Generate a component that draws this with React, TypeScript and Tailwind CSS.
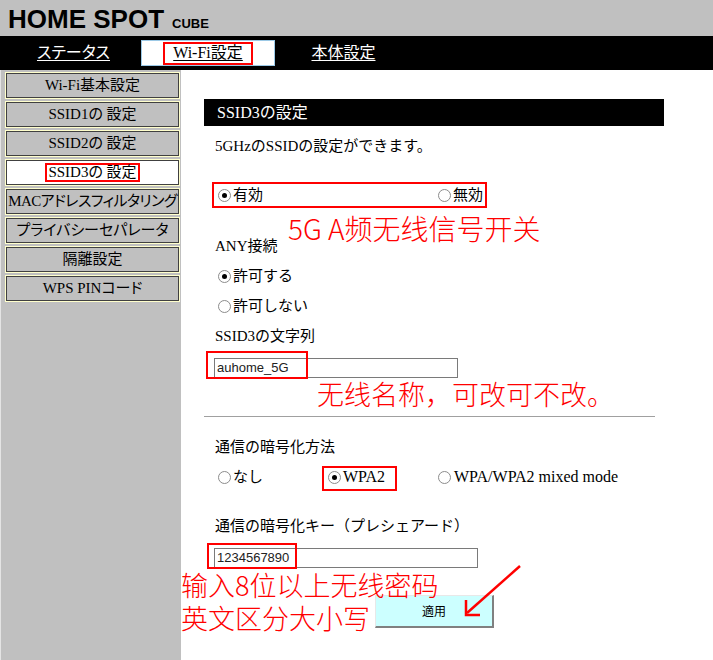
import React from "react";

const jp = "font-['Liberation_Serif','Noto_Sans_CJK_JP',serif]";
const zh = "font-['Noto_Sans_CJK_SC',sans-serif] font-light";

function Radio({ checked }: { checked?: boolean }) {
  return (
    <span className="inline-flex w-[13px] h-[13px] shrink-0 items-center justify-center rounded-full border border-[#8c8c8c] bg-white">
      {checked && <span className="w-[5px] h-[5px] rounded-full bg-black" />}
    </span>
  );
}

const menu = [
  "Wi-Fi基本設定",
  "SSID1の 設定",
  "SSID2の 設定",
  "SSID3の 設定",
  "MACアドレスフィルタリング",
  "プライバシーセパレータ",
  "隔離設定",
  "WPS PINコード",
];

export default function App() {
  return (
    <div className={`min-h-[660px] flex flex-col ${jp} text-black`}>
      {/* header */}
      <header className="h-[36px] bg-[#c0c0c0] pl-[8px] pt-[6px] flex items-baseline font-['Liberation_Sans',sans-serif] font-bold">
        <span className="text-[26px] leading-[26px]">HOME SPOT</span>
        <span className="ml-[8px] text-[13px] leading-[13px]">CUBE</span>
      </header>

      {/* tabs */}
      <nav className="h-[34px] bg-black flex pl-[6px] text-[16px] [font-feature-settings:'palt']">
        <div className="w-[135px] flex items-center justify-center text-white underline underline-offset-2">
          ステータス
        </div>
        <div className="w-[135px] pt-[4px]">
          <div className="w-[134px] h-[26px] bg-white border border-[#9cc9e6] flex items-center justify-center">
            <span className="h-[23px] px-[8px] border-2 border-[#ff0000] flex items-center underline underline-offset-2">
              Wi-Fi設定
            </span>
          </div>
        </div>
        <div className="w-[135px] flex items-center justify-center text-white underline underline-offset-2">
          本体設定
        </div>
      </nav>

      <div className="flex-1 flex">
        {/* side menu */}
        <aside className="w-[181px] shrink-0 bg-[#c0c0c0] border-l border-[#e4e4e4] pl-[4px] pt-[2px] flex flex-col gap-[2px] text-[15px] [font-feature-settings:'palt']">
          {menu.map((m, i) => (
            <div key={m} className="h-[27px] w-[175px] border border-[#ffffcc]">
              <div
                className={`h-full border border-[#404040] flex items-center justify-center whitespace-nowrap ${
                  i === 3 ? "bg-white" : ""
                } ${i === 4 ? "tracking-[-0.6px]" : ""}`}
              >
                {i === 3 ? (
                  <span className="h-[19px] px-[1px] border-2 border-[#ff0000] flex items-center">{m}</span>
                ) : (
                  m
                )}
              </div>
            </div>
          ))}
        </aside>

        {/* main */}
        <main className="relative flex-1 bg-white pt-[29px] pl-[23px] text-[15px]">
          <div className="w-[460px] h-[27px] bg-black text-white text-[16px] flex items-center pl-[13px]">
            SSID3の設定
          </div>
          <div className="h-[5px]" />
          <div className="h-[30px] flex items-center pl-[11px]">5GHzのSSIDの設定ができます。</div>
          <div className="h-[21px]" />
          <div className="ml-[8px] w-[275px] h-[26px] border-2 border-[#ff0000] flex items-center justify-between pl-[4px] pr-[2px]">
            <label className="flex items-center gap-[2px]">
              <Radio checked />
              有効
            </label>
            <label className="flex items-center gap-[2px]">
              <Radio />
              無効
            </label>
          </div>
          <div className="h-[23px]" />
          <div className="h-[30px] flex items-center pl-[11px]">ANY接続</div>
          <label className="h-[30px] flex items-center gap-[2px] pl-[14px]">
            <Radio checked />
            許可する
          </label>
          <label className="h-[30px] flex items-center gap-[2px] pl-[14px]">
            <Radio />
            許可しない
          </label>
          <div className="h-[30px] flex items-center pl-[11px]">SSID3の文字列</div>
          <div className="h-[5px]" />
          <div className="relative ml-[10px] w-[244px] h-[20px]">
            <input
              readOnly
              defaultValue="auhome_5G"
              className="w-full h-full border border-[#7a7a7a] px-[2px] text-[13px] font-['Liberation_Sans',sans-serif] text-[#222] outline-none"
            />
            <div className="absolute -left-[8px] -top-[5px] w-[102px] h-[28px] border-2 border-[#ff0000]" />
          </div>
          <div className="h-[40px]" />
          <div className="w-[451px] border-t border-[#a0a0a0]" />
          <div className="h-[15px]" />
          <div className="h-[30px] flex items-center pl-[11px]">通信の暗号化方法</div>
          <div className="h-[30px] flex pl-[14px]">
            <label className="w-[110px] flex items-center gap-[2px]">
              <Radio />
              なし
            </label>
            <label className="relative w-[110px] flex items-center gap-[2px] text-[16px]">
              <Radio checked />
              WPA2
              <span className="absolute -left-[6px] top-[4px] w-[75px] h-[25px] border-2 border-[#ff0000]" />
            </label>
            <label className="flex items-center gap-[3px] text-[16px] whitespace-nowrap">
              <Radio />
              WPA/WPA2 mixed mode
            </label>
          </div>
          <div className="h-[19px]" />
          <div className="h-[30px] flex items-center pl-[11px]">通信の暗号化キー（プレシェアード）</div>
          <div className="h-[5px]" />
          <div className="relative ml-[10px] w-[264px] h-[20px]">
            <input
              readOnly
              defaultValue="1234567890"
              className="w-full h-full border border-[#7a7a7a] px-[2px] text-[13px] font-['Liberation_Sans',sans-serif] text-[#222] outline-none"
            />
            <div className="absolute -left-[7px] -top-[3px] w-[90px] h-[26px] border-2 border-[#ff0000]" />
          </div>
          <div className="h-[29px]" />
          <button className="ml-[171px] w-[119px] h-[33px] bg-[#ccffff] border-t border-l border-t-[#e8e8e8] border-l-[#e8e8e8] border-r-2 border-b-2 border-r-[#808080] border-b-[#808080] text-[12px] font-['Noto_Sans_CJK_JP',sans-serif]">
            適用
          </button>

          {/* annotations */}
          <div className={`absolute left-[107px] top-[142px] text-[28px] leading-[33px] text-[#ff0000] whitespace-nowrap ${zh}`}>
            5G A频无线信号开关
          </div>
          <div className={`absolute left-[136px] top-[307px] text-[27px] leading-[33px] text-[#ff0000] whitespace-nowrap ${zh}`}>
            无线名称，可改可不改。
          </div>
          <div className={`absolute left-0 top-[504px] text-[27px] leading-[22px] text-[#ff0000] whitespace-nowrap ${zh}`}>
            <div>输入8位以上无线密码</div>
            <div className="mt-[11px]">英文区分大小写</div>
          </div>
          <svg
            className="absolute left-[279px] top-[490px]"
            width="65"
            height="60"
            viewBox="0 0 65 60"
            fill="none"
            stroke="#ff0000"
            strokeWidth="2.5"
          >
            <path d="M60 6 L7 53" />
            <path d="M6 40 L6 55 L20 55" />
          </svg>
        </main>
      </div>
    </div>
  );
}
